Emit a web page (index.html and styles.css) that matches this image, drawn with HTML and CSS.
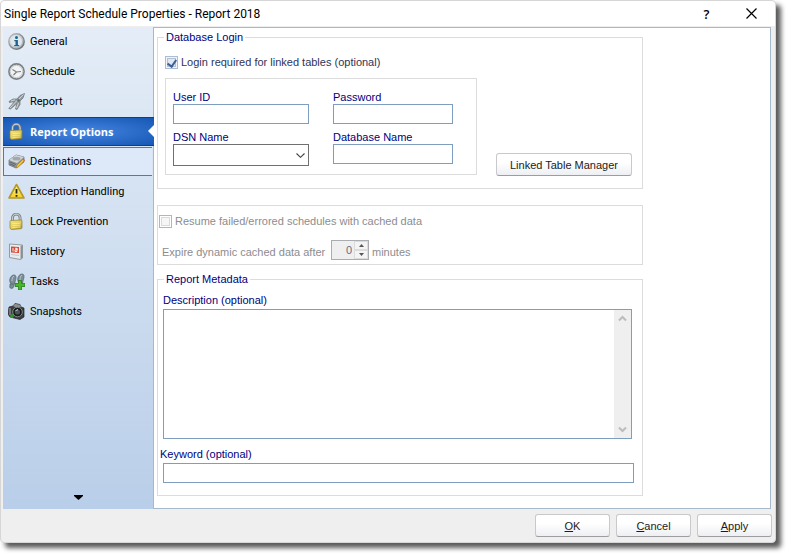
FILE: index.html
```html
<!DOCTYPE html>
<html lang="en">
<head>
<meta charset="utf-8">
<title>Single Report Schedule Properties - Report 2018</title>
<link rel="stylesheet" href="styles.css">
</head>
<body>
<svg class="defs" width="0" height="0" aria-hidden="true">
  <defs>
    <linearGradient id="silver" x1="0" y1="0" x2="1" y2="1"><stop offset="0" stop-color="#f4f6f7"/><stop offset="1" stop-color="#9aa0a4"/></linearGradient>
    <linearGradient id="rim" x1="0" y1="0" x2="1" y2="1"><stop offset="0" stop-color="#b9bec2"/><stop offset="1" stop-color="#5f666b"/></linearGradient>
    <linearGradient id="gold" x1="0" y1="0" x2="1" y2="1"><stop offset="0" stop-color="#f0e58e"/><stop offset=".5" stop-color="#e3cf58"/><stop offset="1" stop-color="#a88d20"/></linearGradient>
    <linearGradient id="sign" x1="0" y1="0" x2="0" y2="1"><stop offset="0" stop-color="#fff59a"/><stop offset="1" stop-color="#f3cf22"/></linearGradient>
    <symbol id="lock" viewBox="0 0 17 17">
      <path d="M4.500 8.500V5a3.800 3.800 0 0 1 7.600 0v3.500" fill="none" stroke="#777c7e" stroke-width="2.800"/>
      <path d="M4.500 8V5a3.800 3.800 0 0 1 7.600 0v3" fill="none" stroke="#c9cdce" stroke-width="1.200"/>
      <path d="M2 8.500q0-1 1-1L13 7q1 0 1 1v6.500q0 1-1 1.200L4 16.500q-1.500 0-2-1.500z" fill="url(#gold)" stroke="#8f802f" stroke-width=".7"/>
      <path d="M4.500 10.500l8-.3M4.500 12.500l8-.3M4.500 14.500l8-.5" stroke="#f7efab" stroke-width=".8"/>
    </symbol>
  </defs>
</svg>
<div class="window">
  <header class="titlebar">
    <h1>Single Report Schedule Properties - Report 2018</h1>
    <button type="button" class="caption" aria-label="Help"><span>?</span></button>
    <button type="button" class="caption" aria-label="Close"><svg width="11" height="11" viewBox="0 0 11 11"><path d="M.5 .5l10 10M10.500 .5l-10 10" stroke="#000" stroke-width="1.200"/></svg></button>
  </header>
  <div class="body">
    <nav class="sidebar">
      <a href="#general"><svg viewBox="0 0 17 17"><circle cx="8.500" cy="8.500" r="7.700" fill="url(#silver)" stroke="url(#rim)" stroke-width="1.400"/><circle cx="8.500" cy="8.500" r="5.500" fill="#dfe8ed"/><circle cx="8.500" cy="4.600" r="1.500" fill="#1d6290"/><path d="M6.300 7h3.600v5h1.300v1.300H6.200V12h1.300V8.200H6.300z" fill="#1d6290"/></svg>General</a>
      <a href="#schedule"><svg viewBox="0 0 17 17"><circle cx="8.500" cy="8.500" r="7.600" fill="#f2f3f4" stroke="#7b8084" stroke-width="1.600"/><circle cx="8.500" cy="8.500" r="6.200" fill="none" stroke="#c5c9cb"/><path d="M4.500 6.500l4 2.500 4.500-.5M8.500 9l-3 3" fill="none" stroke="#7a7f82" stroke-width="1.200"/></svg>Schedule</a>
      <a href="#report"><svg viewBox="0 0 17 17"><path d="M1 8.500L5 6l4 0 3-3.500L16.500.5 15 5l-3 3 0 3.500-3 5-1.500-.5L9 10.500 2.500 16 .8 15.500 6.500 8.500 1.500 9.500z" fill="#949b9f" stroke="#6a7175" stroke-width=".7" stroke-linejoin="round"/><path d="M2 15l7-7.500M8.500 15L10.500 10M11 6l4.500-4.500M3 8l4-1.300" stroke="#d6dadc" stroke-width=".9"/><circle cx="10.500" cy="7.500" r="1.200" fill="#62696d"/></svg>Report</a>
      <a href="#options" class="active" aria-current="page"><svg><use href="#lock"/></svg>Report Options</a>
      <a href="#destinations" class="hover"><svg viewBox="0 0 17 17"><path d="M1 7l7-5 8 2v5l-8 6-7-3z" fill="#90979b" stroke="#666c70" stroke-width=".7"/><path d="M1 7l7-5 8 2-7 6z" fill="#d2d6d8"/><ellipse cx="8.500" cy="5.700" rx="4" ry="1.900" fill="#a2a9ad"/><path d="M2 9l6 2.500M2 11l5 2" stroke="#5d6569"/><path d="M8 15l1-3 6-6 1.500 1.500-6 6.500z" fill="#efc43b" stroke="#9c731e" stroke-width=".6"/><path d="M14 6.500l1-1 2 1.500-1 1z" fill="#d8655a"/></svg>Destinations</a>
      <a href="#exceptions"><svg viewBox="0 0 17 17"><path d="M8.500 1.500L16 15H1z" fill="url(#sign)" stroke="#b39a2a" stroke-width="1.600" stroke-linejoin="round"/><path d="M8.500 6v4.500M8.500 12v1.800" stroke="#252515" stroke-width="1.800"/></svg>Exception Handling</a>
      <a href="#lock-prevention"><svg><use href="#lock"/></svg>Lock Prevention</a>
      <a href="#history"><svg viewBox="0 0 17 17"><path d="M1.500 1l13 1v13l-2 1.500-11-2z" fill="#e9ecee" stroke="#8a9196" stroke-width=".9"/><path d="M14.500 2v13l-2 1.500V3z" fill="#899197"/><path d="M3 3.500l8 .5v6l-8-.5z" fill="#d94837"/><path d="M5 5v3.500M7 5.300h2v1.500H7v1.700h2V5.300" fill="none" stroke="#fff" stroke-width=".9"/><path d="M3 11.500l8 1" stroke="#c5cacd"/></svg>History</a>
      <a href="#tasks"><svg viewBox="0 0 17 17"><path d="M2 9c-1-3 1-7 4-7 3 0 2 4 1 7l-.5 2-4-.5zM2 11l4 .7-1 3.300q-2 1-3.200-.5zM10 8c-1-3 1-7 4-7 3 0 2 4 1 7l-.5 2-4-.5z" fill="#7c8d97" stroke="#52626c" stroke-width=".7"/><path d="M4 8c0-2 .5-4 2-5M12 7c0-2 .5-4 2-5" fill="none" stroke="#b9c6cd"/><path d="M10.500 7.500h3v3H17v3h-3.500V17h-3v-3.500H7v-3h3.500z" fill="#45b82a" stroke="#267a18" stroke-width=".8"/></svg>Tasks</a>
      <a href="#snapshots"><svg viewBox="0 0 17 17"><path d="M1 4l4-1 2-2.500 5 1L13 4l3 1v9l-4 2.500L2 14 0 11z" fill="#3b3d3e" stroke="#242526" stroke-width=".7"/><path d="M5 3l2-2.300 5 1L13 4 9 5z" fill="#8b8f91"/><circle cx="9.500" cy="9" r="4.800" fill="#17191a" stroke="#85898b"/><circle cx="9.500" cy="9" r="2.600" fill="#4a5357"/><path d="M7.500 8.200q1-1.700 2.500-1.500" fill="none" stroke="#d4dadd"/><path d="M2 5v7" stroke="#85898b" stroke-width="1.500"/><path d="M4 11v4M2 13h4" stroke="#36952c" stroke-width="1.700"/></svg>Snapshots</a>
      <button type="button" class="more" aria-label="More sections"><svg width="9" height="5" viewBox="0 0 9 5"><path d="M0 0h9v1L4.500 5 0 1z" fill="#000"/></svg></button>
    </nav>
    <main class="panel">
      <fieldset class="group login">
        <legend>Database Login</legend>
        <label class="check"><input type="checkbox" checked>Login required for linked tables (optional)</label>
        <div class="login-row">
          <div class="credentials">
            <div class="field"><label for="user">User ID</label><input id="user" type="text"></div>
            <div class="field"><label for="password">Password</label><input id="password" type="password"></div>
            <div class="field"><label for="dsn">DSN Name</label>
              <div class="combo"><select id="dsn"><option></option></select><svg width="9" height="5" viewBox="0 0 9 5"><path d="M.5 .5l4 3.800 4-3.800" fill="none" stroke="#444" stroke-width="1.100"/></svg></div>
            </div>
            <div class="field"><label for="database">Database Name</label><input id="database" type="text"></div>
          </div>
          <button type="button" class="btn manager">Linked Table Manager</button>
        </div>
      </fieldset>
      <fieldset class="group cache" disabled>
        <label class="check"><input type="checkbox">Resume failed/errored schedules with cached data</label>
        <div class="expire">
          <label for="minutes">Expire dynamic cached data after</label>
          <div class="spinner">
            <input id="minutes" type="number" value="0">
            <div class="steps">
              <button type="button" aria-label="Increase"><svg width="5" height="3" viewBox="0 0 5 3"><path d="M0 3L2.500 0 5 3z" fill="#555"/></svg></button>
              <button type="button" aria-label="Decrease"><svg width="5" height="3" viewBox="0 0 5 3"><path d="M0 0l2.500 3L5 0z" fill="#555"/></svg></button>
            </div>
          </div>
          <span>minutes</span>
        </div>
      </fieldset>
      <fieldset class="group metadata">
        <legend>Report Metadata</legend>
        <label class="description" for="description">Description (optional)</label>
        <div class="memo">
          <textarea id="description"></textarea>
          <div class="scrollbar">
            <svg width="9" height="7" viewBox="0 0 9 7"><path d="M1 5.500L4.500 2 8 5.500" fill="none" stroke="#bcbcbc" stroke-width="2"/></svg>
            <svg width="9" height="7" viewBox="0 0 9 7"><path d="M1 1.500L4.500 5 8 1.500" fill="none" stroke="#bcbcbc" stroke-width="2"/></svg>
          </div>
        </div>
        <label class="keyword" for="keyword">Keyword (optional)</label>
        <input id="keyword" class="keyword-box" type="text">
      </fieldset>
    </main>
  </div>
  <footer class="actions">
    <button type="button" class="btn"><span><u>O</u>K</span></button>
    <button type="button" class="btn"><span><u>C</u>ancel</span></button>
    <button type="button" class="btn"><span><u>A</u>pply</span></button>
  </footer>
</div>
</body>
</html>
```
FILE: styles.css
```css
* { box-sizing: border-box; }

body {
  margin: 0;
  padding: 0 15px 15px 0;
  background: #fff;
  color: #000080;
  font: 11px/14px "Liberation Sans", Arial, sans-serif;
}

button, input, select, textarea { font: inherit; margin: 0; }

.defs { position: absolute; }

.window {
  display: flex;
  flex-direction: column;
  min-height: calc(100vh - 15px);
  border: 1px solid #d6d6d6;
  border-radius: 4px;
  background: #efefef;
  box-shadow: 5px 5px 5px rgba(0, 0, 0, .65);
}

.titlebar {
  display: flex;
  align-items: center;
  height: 25px;
  padding: 0 1px 0 3px;
  border-radius: 4px 4px 0 0;
  background: #fff;
  color: #000;
}

.titlebar h1 {
  flex: 1;
  margin: 0;
  font: 12px/16px Roboto, "Noto Sans", sans-serif;
}

.caption {
  display: flex;
  align-items: center;
  justify-content: center;
  width: 45px;
  height: 24px;
  padding: 0;
  border: 0;
  background: none;
  font: 600 13px/16px "Open Sans", sans-serif;
}

.body {
  flex: 1;
  display: grid;
  grid-template-columns: 150px minmax(0, 1fr);
  margin: 1px 4px 0 2px;
}

.sidebar {
  display: flex;
  flex-direction: column;
  background: linear-gradient(#e4edf7, #b9cee9);
}

.sidebar a {
  display: flex;
  align-items: center;
  gap: 5px;
  height: 29px;
  margin-bottom: 1px;
  padding-left: 5px;
  color: #000;
  font: 11px/16px Roboto, "Noto Sans", sans-serif;
  text-decoration: none;
}

.sidebar a svg { width: 17px; height: 17px; }

.sidebar .active {
  position: relative;
  margin-right: -1px;
  border-block: 1px solid #0d3c91;
  background: radial-gradient(ellipse at center, #4687e2, #1656b4);
  color: #fff;
  font-family: "Open Sans", "Noto Sans", sans-serif;
  font-weight: 700;
}

.sidebar .active::after {
  content: "";
  position: absolute;
  right: 0;
  top: 7px;
  border: 6px solid transparent;
  border-right-color: #fff;
  border-left: 0;
}

.sidebar .hover {
  margin-right: 1px;
  padding-left: 4px;
  border: 1px solid #4778d0;
  border-right: 0;
  background: #dde9f9;
}

.more {
  display: flex;
  justify-content: center;
  margin-top: auto;
  padding: 9px;
  border: 0;
  background: none;
}

.panel {
  padding: 2px 127px 12px 3px;
  border: 1px solid #a5b8cc;
  background: #fff;
}

.group {
  min-width: 0;
  margin: 0;
  padding: 0;
  border: 1px solid #dcdcdc;
}

.group legend {
  margin-left: -1px;
  padding: 0 2px;
}

.check {
  display: flex;
  align-items: center;
  gap: 3px;
}

.check input {
  appearance: none;
  width: 13px;
  height: 13px;
  border: 1px solid #a9bdd8;
  background: #dfe8f2;
  box-shadow: inset 0 0 0 1px #f2f5f8, inset 0 0 0 2px #b5c1d0;
}

.check input:checked::before {
  content: "";
  display: block;
  width: 4px;
  height: 7px;
  margin: 1px 0 0 3px;
  border: solid #3c5f96;
  border-width: 0 2px 2px 0;
  transform: rotate(35deg);
}

.login { padding: 11px 10px 13px 7px; }
.login .check { color: #2e3458; }

.login-row {
  display: flex;
  justify-content: space-between;
  align-items: flex-end;
  margin-top: 9px;
}

.credentials {
  display: grid;
  grid-template-columns: 136px 120px;
  gap: 6px 24px;
  padding: 11px 23px 8px 7px;
  border: 1px solid #dcdcdc;
}

.field { display: flex; flex-direction: column; }

input[type="text"], input[type="password"] {
  width: 100%;
  height: 20px;
  padding: 1px 4px;
  border: 1px solid #7f9dbf;
  background: #fff;
}

.combo { position: relative; }

.combo select {
  display: block;
  appearance: none;
  width: 100%;
  height: 22px;
  border: 1px solid #707070;
  border-radius: 0;
  background: #fff;
}

.combo svg {
  position: absolute;
  right: 4px;
  top: 9px;
  pointer-events: none;
}

.btn {
  width: 75px;
  height: 23px;
  padding: 0;
  border: 1px solid #c9c9cb;
  border-bottom-color: #9d9da0;
  border-radius: 3px;
  background: linear-gradient(#fff 40%, #eeeff3);
  color: #1c1c1c;
}

.btn.manager { width: 136px; margin-bottom: -1px; }

.cache {
  margin-top: 16px;
  padding: 8px 1px 4px;
  color: #8c8c90;
}

.cache .check input {
  border-color: #b5b5b5;
  background: #f6f6f6;
  box-shadow: inset 0 0 0 1px #fff, inset 0 0 0 2px #dadada;
}

.expire {
  display: flex;
  align-items: center;
  gap: 3px;
  margin-top: 12px;
  padding-left: 3px;
}

.expire label { width: 166px; }
.expire label, .expire span { padding-top: 4px; }

.spinner {
  display: flex;
  width: 38px;
  height: 20px;
  border: 1px solid #a9acb0;
  background: #efefef;
}

.spinner input {
  appearance: textfield;
  flex: 1;
  width: 0;
  padding: 0 2px;
  border: 0;
  background: none;
  color: #6b6d80;
  text-align: right;
}

.spinner input::-webkit-inner-spin-button { appearance: none; }

.steps { display: grid; width: 14px; }

.steps button {
  display: flex;
  align-items: center;
  justify-content: center;
  padding: 0;
  border: 1px solid #dcdcdc;
  background: #f4f4f4;
}

.metadata {
  margin-top: 7px;
  padding: 7px 8px 12px 5px;
}

.metadata legend { margin-left: 1px; }
.metadata label { display: block; }
.metadata .keyword { margin: 8px 0 2px -3px; }

.memo {
  display: flex;
  height: 130px;
  margin-right: 2px;
  margin-top: 2px;
  border: 1px solid #7f9dbf;
}

.memo textarea {
  flex: 1;
  padding: 2px 4px;
  border: 0;
  outline: 0;
  resize: none;
}

.scrollbar {
  display: flex;
  flex-direction: column;
  justify-content: space-between;
  align-items: center;
  width: 17px;
  padding: 5px 0;
  background: #efefef;
}

.actions {
  display: flex;
  justify-content: flex-end;
  gap: 6px;
  padding: 5px 3px;
}
```
